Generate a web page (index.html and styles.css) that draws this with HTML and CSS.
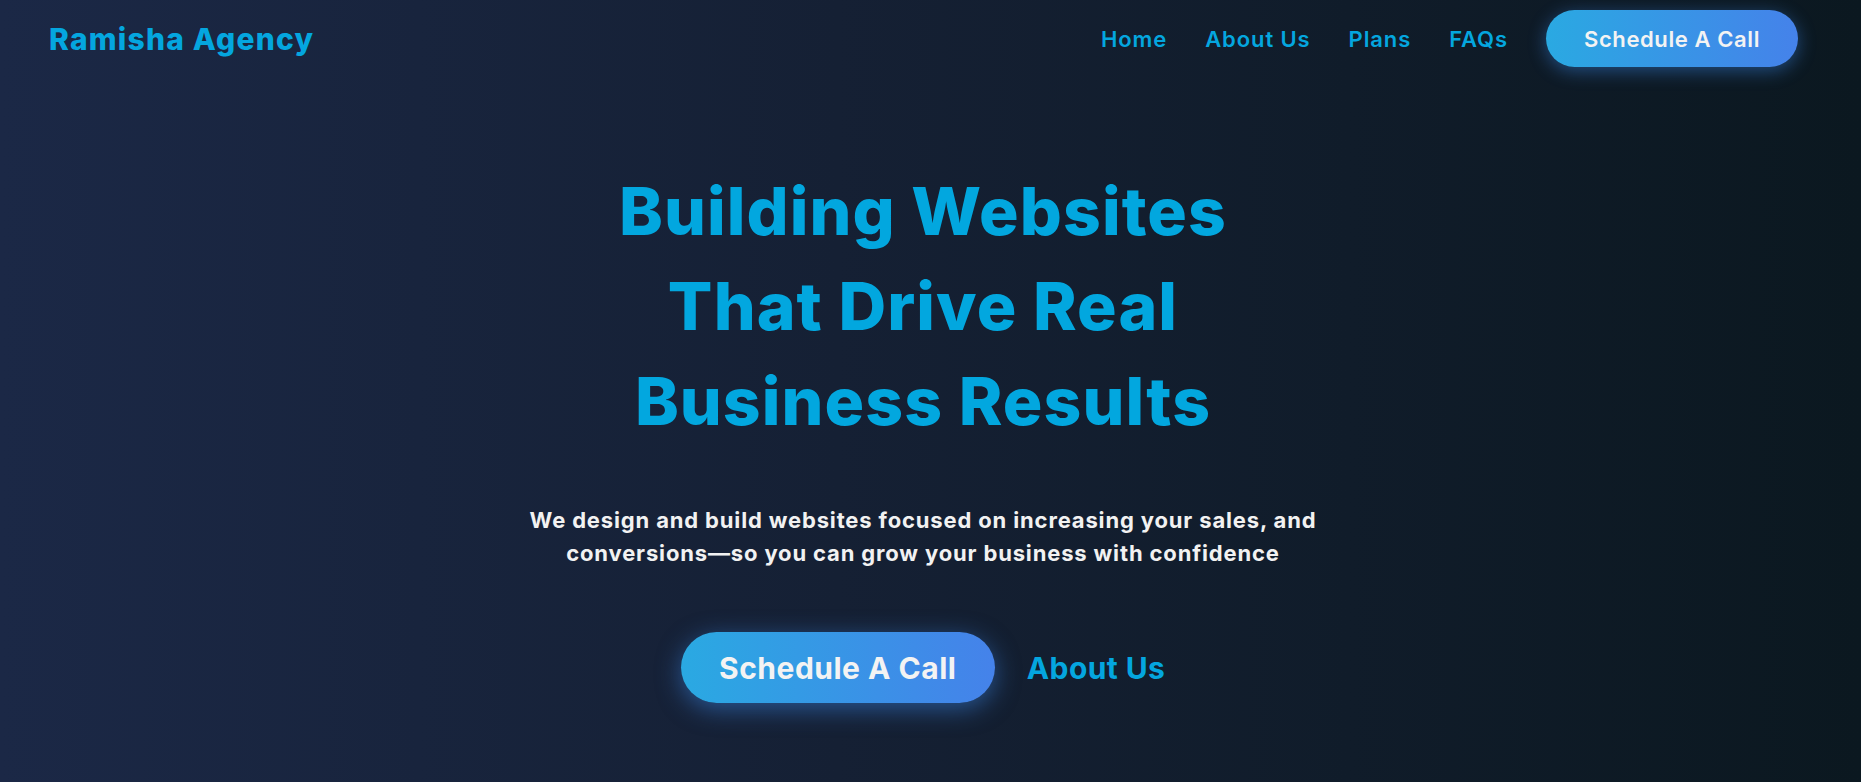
FILE: index.html
```html
<!DOCTYPE html>
<html lang="en">
<head>
<meta charset="utf-8">
<title>Ramisha Agency</title>
<link rel="stylesheet" href="styles.css">
</head>
<body>
<div class="page">
  <header class="header">
    <a class="logo" href="#">Ramisha Agency</a>
    <nav class="nav">
      <a class="nav-link" href="#">Home</a>
      <a class="nav-link" href="#">About Us</a>
      <a class="nav-link" href="#">Plans</a>
      <a class="nav-link" href="#">FAQs</a>
      <a class="btn btn-nav" href="#">Schedule A Call</a>
    </nav>
  </header>
  <main class="hero">
    <h1 class="hero-title">Building Websites<br>That Drive Real<br>Business Results</h1>
    <p class="hero-sub">We design and build websites focused on increasing your sales, and<br>conversions—so you can grow your business with confidence</p>
    <div class="hero-actions">
      <a class="btn btn-hero" href="#">Schedule A Call</a>
      <a class="link-hero" href="#">About Us</a>
    </div>
  </main>
</div>
</body>
</html>
```

FILE: styles.css
```css
* { box-sizing: border-box; margin: 0; padding: 0; }
html, body { height: 100%; }
body {
  font-family: "Inter", "Noto Sans", sans-serif;
  background: linear-gradient(90deg, #1b2846 0%, #152034 45%, #0b1820 100%);
  color: #f2f2f2;
  overflow: hidden;
}
a { text-decoration: none; }
.page {
  min-height: 100vh;
  padding-right: 15px;
}
.header {
  display: flex;
  align-items: center;
  justify-content: space-between;
  height: 77px;
  padding: 0 48px 0 49px;
}
.logo {
  font-size: 30px;
  font-weight: 800;
  color: #04a6df;
  letter-spacing: 1.2px;
}
.nav {
  display: flex;
  align-items: center;
  gap: 38px;
}
.nav-link {
  font-size: 22px;
  font-weight: 600;
  color: #04a6df;
  letter-spacing: 0.9px;
}
.btn {
  display: inline-flex;
  align-items: center;
  justify-content: center;
  color: #f3f3f3;
  border-radius: 999px;
  background: linear-gradient(90deg, #2aa9e2 0%, #4582ea 100%);
  box-shadow: 0 4px 18px rgba(60, 140, 240, 0.45);
}
.btn-nav {
  height: 57px;
  width: 252px;
  font-size: 22px;
  font-weight: 600;
  letter-spacing: 0.6px;
}
.hero {
  display: flex;
  flex-direction: column;
  align-items: center;
  text-align: center;
  padding-top: 87px;
}
.hero-title {
  font-size: 66px;
  font-weight: 800;
  line-height: 95px;
  color: #02a7df;
  letter-spacing: 1.1px;
}
.hero-sub {
  margin-top: 55px;
  font-size: 22px;
  font-weight: 700;
  line-height: 33px;
  color: #f2f2f2;
  letter-spacing: 0.85px;
}
.hero-actions {
  margin-top: 62px;
  display: flex;
  align-items: center;
  gap: 32px;
}
.btn-hero {
  height: 71px;
  width: 314px;
  font-size: 30px;
  font-weight: 700;
  letter-spacing: 0.5px;
  box-shadow: 0 6px 24px rgba(60, 140, 240, 0.5);
}
.link-hero {
  font-size: 30px;
  font-weight: 700;
  color: #04a6df;
  letter-spacing: 0.4px;
}
```
